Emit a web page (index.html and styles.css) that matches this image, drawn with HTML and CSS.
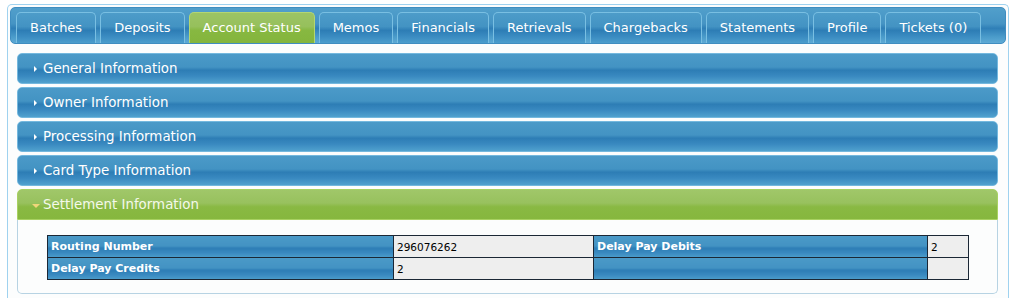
FILE: index.html
```html
<!DOCTYPE html>
<html lang="en">
<head>
    <meta charset="UTF-8">
    <title>Account Status</title>
    <link rel="stylesheet" href="styles.css">
</head>
<body>
    <div class="tabs">
        <ul class="tab-nav">
            <li><a href="#">Batches</a></li>
            <li><a href="#">Deposits</a></li>
            <li class="active"><a href="#">Account Status</a></li>
            <li><a href="#">Memos</a></li>
            <li><a href="#">Financials</a></li>
            <li><a href="#">Retrievals</a></li>
            <li><a href="#">Chargebacks</a></li>
            <li><a href="#">Statements</a></li>
            <li><a href="#">Profile</a></li>
            <li><a href="#">Tickets (0)</a></li>
        </ul>
        <div class="tab-panel">
            <div class="acc-header"><span class="arrow"></span>General Information</div>
            <div class="acc-header"><span class="arrow"></span>Owner Information</div>
            <div class="acc-header"><span class="arrow"></span>Processing Information</div>
            <div class="acc-header"><span class="arrow"></span>Card Type Information</div>
            <div class="acc-header open"><span class="arrow down"></span>Settlement Information</div>
            <div class="acc-content">
                <table class="info-table">
                    <colgroup>
                        <col class="c1">
                        <col class="c2">
                        <col class="c3">
                        <col class="c4">
                    </colgroup>
                    <tr>
                        <th>Routing Number</th>
                        <td>296076262</td>
                        <th>Delay Pay Debits</th>
                        <td>2</td>
                    </tr>
                    <tr>
                        <th>Delay Pay Credits</th>
                        <td>2</td>
                        <th></th>
                        <td></td>
                    </tr>
                </table>
            </div>
        </div>
    </div>
</body>
</html>
```

FILE: styles.css
```css
body {
    margin: 0;
    padding: 4px 7px 0 7px;
    background: #ffffff;
    font-family: "DejaVu Sans", Verdana, sans-serif;
    font-size: 13.4px;
}

.tabs {
    border: 1px solid #9fd2ef;
    border-bottom: none;
    border-radius: 5px 5px 0 0;
    background: #fcfdfd;
    padding: 2px 2px 0 2px;
    height: 300px;
}

.tab-nav {
    list-style: none;
    margin: 0;
    padding: 4px 4px 0 5px;
    height: 31px;
    display: flex;
    gap: 4px;
    border: 1px solid #3f8dc0;
    border-radius: 5px;
    background: linear-gradient(to bottom, #519fcb 0%, #4594c4 45%, #2f7fb7 58%, #4a9bca 82%, #5eaad5 100%);
}

.tab-nav li {
    height: 31px;
}

.tab-nav a {
    display: block;
    height: 30px;
    line-height: 29px;
    padding: 0 13px;
    font-size: 13px;
    color: #ffffff;
    text-decoration: none;
    border: 1px solid #79bfe2;
    border-bottom: none;
    border-radius: 5px 5px 0 0;
    background: linear-gradient(to bottom, #4d9cc9 0%, #4393c3 45%, #2d7db5 58%, #3a8bc1 78%, #4b9dcc 100%);
}

.tab-nav li.active a {
    border-color: #b3d672;
    background: linear-gradient(to bottom, #9cc464 0%, #96c05c 45%, #87b841 58%, #84b53c 100%);
}

.tab-panel {
    padding: 8px 8px 0 7px;
}

.acc-header {
    height: 29px;
    line-height: 29px;
    margin-top: 3px;
    padding-left: 25px;
    position: relative;
    color: #ffffff;
    border: 1px solid #74b8de;
    border-radius: 5px;
    background: linear-gradient(to bottom, #4b9ac8 0%, #4393c3 45%, #2d7db5 56%, #3989c0 76%, #50a1ce 100%);
}

.acc-header:first-child {
    margin-top: 1px;
}

.acc-header.open {
    border-color: #a8d162;
    border-radius: 5px 5px 0 0;
    color: #f4f9ea;
    background: linear-gradient(to bottom, #a0c769 0%, #98c15e 45%, #89b943 58%, #86b73e 100%);
}

.arrow {
    position: absolute;
    left: 16px;
    top: 12px;
    width: 0;
    height: 0;
    border-top: 3.5px solid transparent;
    border-bottom: 3.5px solid transparent;
    border-left: 3.5px solid #ffffff;
}

.arrow.down {
    left: 14px;
    top: 14px;
    border-left: 4px solid transparent;
    border-right: 4px solid transparent;
    border-top: 4px solid #f0d67a;
    border-bottom: none;
}

.acc-content {
    border: 1px solid #b7d3e3;
    border-top: none;
    border-radius: 0 0 5px 5px;
    background: #fcfdfd;
    padding: 15px 29px 13px 29px;
}

.info-table {
    width: 100%;
    border-collapse: collapse;
    table-layout: fixed;
}

.info-table col.c1 { width: 346px; }
.info-table col.c2 { width: 200px; }
.info-table col.c3 { width: 334px; }
.info-table col.c4 { width: 41px; }

.info-table th,
.info-table td {
    height: 21px;
    padding: 0 3px;
    border: 1px solid #1b2735;
    text-align: left;
}

.info-table th {
    font-size: 11px;
    font-weight: bold;
    color: #ffffff;
    background: linear-gradient(to bottom, #4a99c7 0%, #4393c3 45%, #2d7db5 56%, #3989c0 78%, #4c9dcb 100%);
}

.info-table td {
    font-size: 10.5px;
    color: #000000;
    background: #eeeeee;
}
```
